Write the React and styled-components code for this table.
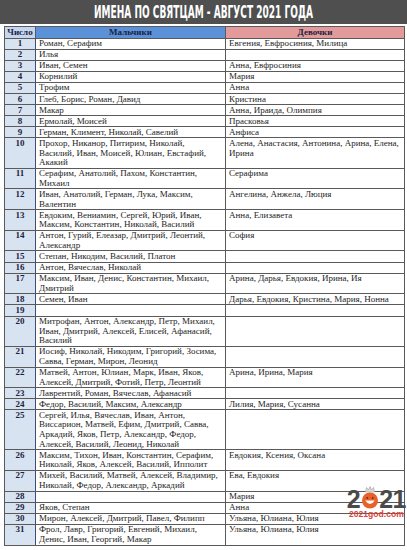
import React from "react";
import styled, { createGlobalStyle } from "styled-components";

const GlobalStyle = createGlobalStyle`
  html, body {
    margin: 0;
    padding: 0;
    background: #ffffff;
  }
  body {
    font-family: "Liberation Serif", "DejaVu Serif", serif;
  }
`;

const Page = styled.div`
  position: relative;
  width: 407px;
  height: 550px;
  overflow: hidden;
  background: #ffffff;
`;

const TitleBar = styled.div`
  height: 24px;
  background: #4f4f4f;
  display: flex;
  align-items: center;
  justify-content: center;
  overflow: hidden;
`;

const Title = styled.span`
  display: inline-block;
  font-family: "DejaVu Sans Condensed", "DejaVu Sans", sans-serif;
  font-stretch: condensed;
  font-weight: 700;
  font-size: 17px;
  color: #ffffff;
  white-space: nowrap;
  transform: scaleX(0.59);
`;

const TableWrap = styled.div`
  padding: 2px 3px 0 4px;
`;

const Table = styled.table`
  width: 400px;
  border-collapse: collapse;
  table-layout: fixed;
  border: 1px solid #5a5a5a;
  font-size: 9px;
  line-height: 9.6px;
  color: #1e1e1e;
`;

const HeadCell = styled.th`
  background: ${(p) => p.$bg};
  border: 1px solid #5a5a5a;
  padding: 1px 0 0;
  height: 9px;
  font-weight: 700;
  font-size: 9px;
  color: #1c2340;
  text-align: center;
`;

const NumCell = styled.td`
  background: #d8e3f1;
  border: 1px solid #5a5a5a;
  border-right-color: #3d4f75;
  padding: 0.5px 0 0;
  font-weight: 700;
  text-align: center;
  vertical-align: top;
  color: #1c2340;
`;

const NameCell = styled.td`
  border: 1px solid #5a5a5a;
  padding: 0.5px 0 0 3px;
  vertical-align: top;
  white-space: nowrap;
  overflow: hidden;
`;

const Logo = styled.div`
  position: absolute;
  right: 1px;
  top: 486px;
  display: flex;
  flex-direction: column;
  align-items: center;
`;

const LogoDigits = styled.div`
  display: flex;
  align-items: flex-end;
  height: 24px;
  font-family: "Liberation Sans", Arial, sans-serif;
  font-weight: 700;
  font-size: 25px;
  line-height: 22px;
  color: #4a4a4a;
  letter-spacing: -0.5px;
`;

const LogoSite = styled.div`
  font-family: "Liberation Sans", Arial, sans-serif;
  font-weight: 700;
  font-size: 8.6px;
  line-height: 9px;
  color: #d9463c;
`;

const rows = [
  ["Роман, Серафим", "Евгения, Евфросиния, Милица"],
  ["Илья", ""],
  ["Иван, Семен", "Анна, Евфросиния"],
  ["Корнилий", "Мария"],
  ["Трофим", "Анна"],
  ["Глеб, Борис, Роман, Давид", "Кристина"],
  ["Макар", "Анна, Ираида, Олимпия"],
  ["Ермолай, Моисей", "Прасковья"],
  ["Герман, Климент, Николай, Савелий", "Анфиса"],
  [
    "Прохор, Никанор, Питирим, Николай,|Василий, Иван, Моисей, Юлиан, Евстафий,|Акакий",
    "Алена, Анастасия, Антонина, Арина, Елена,|Ирина",
  ],
  ["Серафим, Анатолий, Пахом, Константин,|Михаил", "Серафима"],
  ["Иван, Анатолий, Герман, Лука, Максим,|Валентин", "Ангелина, Анжела, Люция"],
  ["Евдоким, Вениамин, Сергей, Юрий, Иван,|Максим, Константин, Николай, Василий", "Анна, Елизавета"],
  ["Антон, Гурий, Елеазар, Дмитрий, Леонтий,|Александр", "София"],
  ["Степан, Никодим, Василий, Платон", ""],
  ["Антон, Вячеслав, Николай", ""],
  ["Максим, Иван, Денис, Константин, Михаил,|Дмитрий", "Арина, Дарья, Евдокия, Ирина, Ия"],
  ["Семен, Иван", "Дарья, Евдокия, Кристина, Мария, Нонна"],
  ["", ""],
  ["Митрофан, Антон, Александр, Петр, Михаил,|Иван, Дмитрий, Алексей, Елисей, Афанасий,|Василий", ""],
  ["Иосиф, Николай, Никодим, Григорий, Зосима,|Савва, Герман, Мирон, Леонид", ""],
  ["Матвей, Антон, Юлиан, Марк, Иван, Яков,|Алексей, Дмитрий, Фотий, Петр, Леонтий", "Арина, Ирина, Мария"],
  ["Лаврентий, Роман, Вячеслав, Афанасий", ""],
  ["Федор, Василий, Максим, Александр", "Лилия, Мария, Сусанна"],
  [
    "Сергей, Илья, Вячеслав, Иван, Антон,|Виссарион, Матвей, Ефим, Дмитрий, Савва,|Аркадий, Яков, Петр, Александр, Федор,|Алексей, Василий, Леонид, Николай",
    "",
  ],
  ["Максим, Тихон, Иван, Константин, Серафим,|Николай, Яков, Алексей, Василий, Ипполит", "Евдокия, Ксения, Оксана"],
  ["Михей, Василий, Матвей, Алексей, Владимир,|Николай, Федор, Александр, Аркадий", "Ева, Евдокия"],
  ["", "Мария"],
  ["Яков, Степан", "Анна"],
  ["Мирон, Алексей, Дмитрий, Павел, Филипп", "Ульяна, Юлиана, Юлия"],
  ["Фрол, Лавр, Григорий, Евгений, Михаил,|Денис, Иван, Георгий, Макар", "Ульяна, Юлиана, Юлия"],
];

const Lines = ({ text }) => {
  if (!text) return "\u00a0";
  const parts = text.split("|");
  return parts.map((line, i) => (
    <React.Fragment key={i}>
      {line}
      {i < parts.length - 1 && <br />}
    </React.Fragment>
  ));
};

const Smiley = () => (
  <svg width="18" height="26" viewBox="0 0 18 26" style={{ margin: "0 0.5px" }}>
    <path d="M4.5 8 L5.5 3.5 L7.5 6 L9 2.5 L10.5 6 L12.5 3.5 L13.5 8 Z" fill="#dcdcdc" stroke="#9a9a9a" strokeWidth="0.6" />
    <circle cx="9" cy="16.5" r="8" fill="#e8612a" />
    <circle cx="6.3" cy="14" r="0.9" fill="#7a2a10" />
    <circle cx="11.7" cy="14" r="0.9" fill="#7a2a10" />
    <path d="M4.2 16.5 Q9 23.5 13.8 16.5 Z" fill="#ffffff" />
  </svg>
);

export default function App() {
  return (
    <Page>
      <GlobalStyle />
      <TitleBar>
        <Title>ИМЕНА ПО СВЯТЦАМ - АВГУСТ 2021 ГОДА</Title>
      </TitleBar>
      <TableWrap>
        <Table>
          <colgroup>
            <col style={{ width: 31 }} />
            <col style={{ width: 190 }} />
            <col style={{ width: 179 }} />
          </colgroup>
          <thead>
            <tr>
              <HeadCell $bg="#c5d6ee">Число</HeadCell>
              <HeadCell $bg="#5a91d8">Мальчики</HeadCell>
              <HeadCell $bg="#e39a9a">Девочки</HeadCell>
            </tr>
          </thead>
          <tbody>
            {rows.map(([boys, girls], i) => (
              <tr key={i}>
                <NumCell>{i + 1}</NumCell>
                <NameCell>
                  <Lines text={boys} />
                </NameCell>
                <NameCell>
                  <Lines text={girls} />
                </NameCell>
              </tr>
            ))}
          </tbody>
        </Table>
      </TableWrap>
      <Logo>
        <LogoDigits>
          <span>2</span>
          <Smiley />
          <span>21</span>
        </LogoDigits>
        <LogoSite>2021god.com</LogoSite>
      </Logo>
    </Page>
  );
}
